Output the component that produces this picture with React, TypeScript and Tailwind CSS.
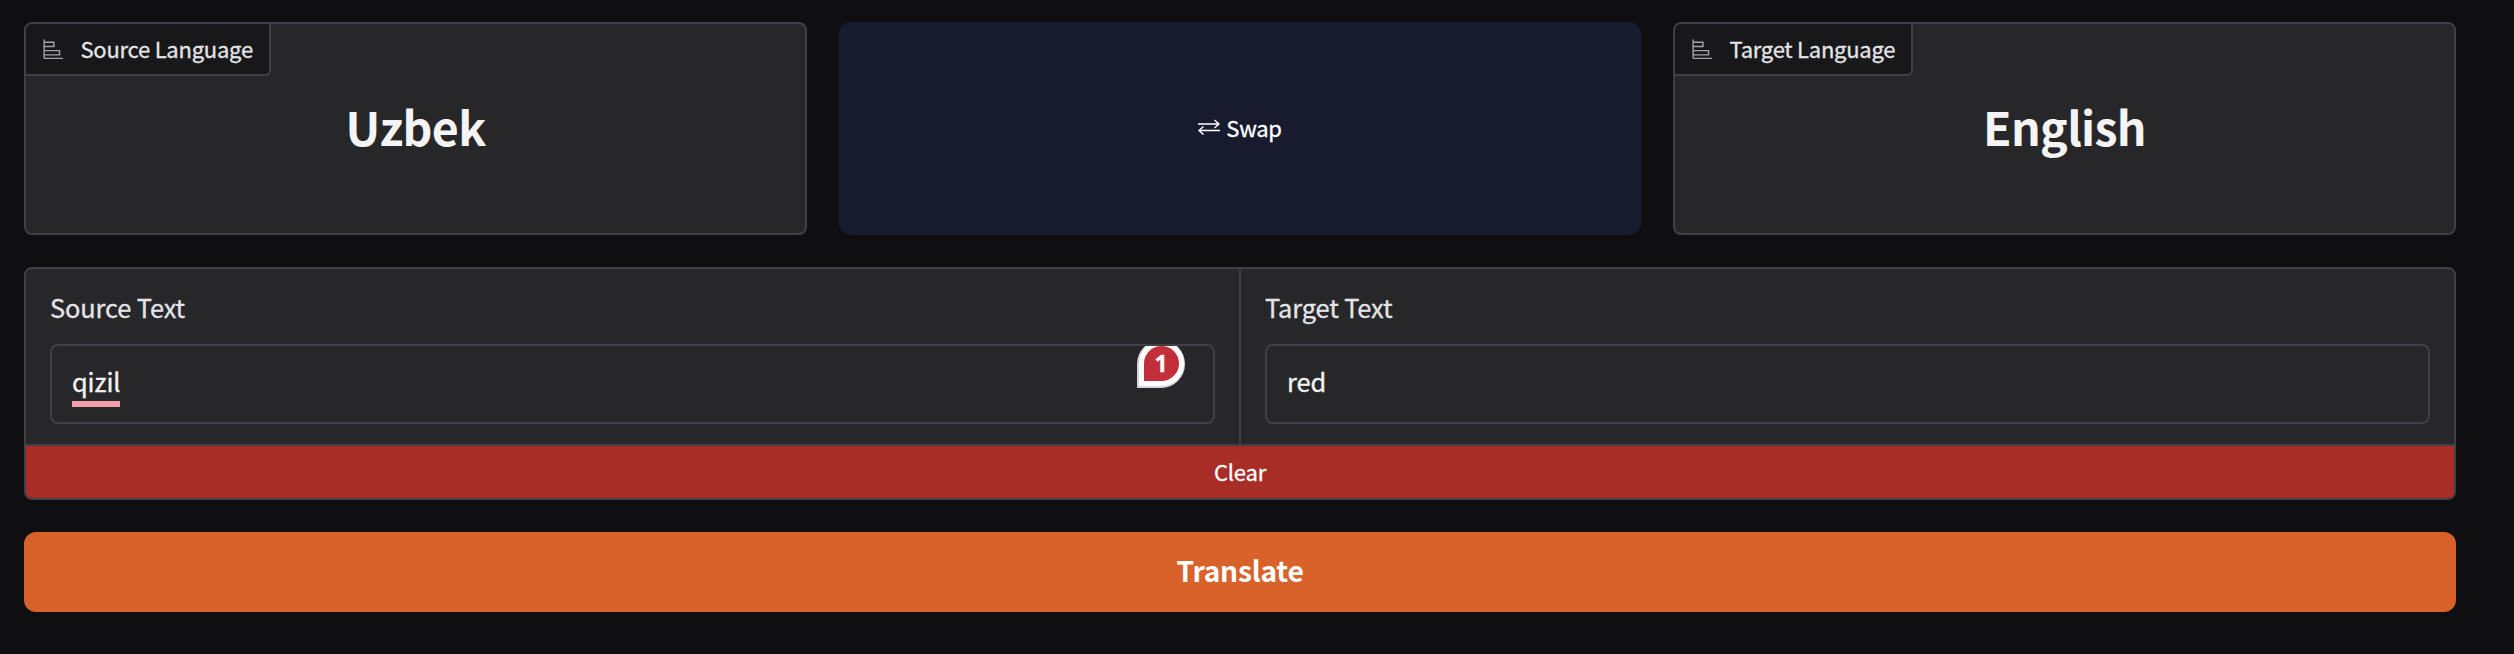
import React from "react";

function BarChartIcon() {
  return (
    <svg viewBox="0 0 32 32" className="h-[22.5px] w-[22.5px] text-[#a1a1aa]" aria-hidden="true">
      <path
        fill="currentColor"
        d="M4 2H2v26a2 2 0 0 0 2 2h26v-2H4v-3h22v-8H4v-4h14V5H4Zm20 17v4H4v-4ZM16 7v4H4V7Z"
      />
    </svg>
  );
}

function LanguageCard({ label, value }: { label: string; value: string }) {
  return (
    <section className="relative flex h-[213px] w-[783px] items-center justify-center overflow-hidden rounded-lg border-2 border-[#3f3f46] bg-[#27272a]">
      <div className="absolute left-0 top-0 flex h-[52px] items-center gap-4 rounded-br-md border-b-2 border-r-2 border-[#3f3f46] bg-[#18181b] pl-4 pr-4 text-[22px] leading-none tracking-[-0.25px] text-[#e4e4e7] [-webkit-text-stroke:0.3px_#e4e4e7]">
        <BarChartIcon />
        <span className="whitespace-nowrap pb-[2px]">{label}</span>
      </div>
      <h2 className="pb-[5px] text-[46.5px] font-bold leading-none tracking-[-0.7px] text-[#f4f4f5]">{value}</h2>
    </section>
  );
}

function TextField({ label, children }: { label: string; children: React.ReactNode }) {
  return (
    <div className="flex flex-1 flex-col bg-[#27272a] px-6 pt-5">
      <span className="h-[55px] text-[25.4px] leading-[36px] tracking-[-0.12px] text-[#e4e4e7] [-webkit-text-stroke:0.3px_#e4e4e7]">
        {label}
      </span>
      <div className="relative flex h-20 items-center overflow-hidden rounded-lg border-2 border-[#3f3f46] px-5 pb-[5px] text-[25.4px] leading-none tracking-[-0.12px] text-[#f4f4f5] [-webkit-text-stroke:0.3px_#f4f4f5]">
        {children}
      </div>
    </div>
  );
}

export default function App() {
  return (
    <main className="flex h-[654px] w-[2514px] flex-col gap-8 bg-[#0f0f11] pl-6 pt-[22px] font-['Noto_Sans_CJK_SC',sans-serif]">
      <div className="flex w-[2432px] gap-8">
        <LanguageCard label="Source Language" value="Uzbek" />
        <button className="flex h-[213px] flex-1 items-center justify-center gap-[6px] rounded-xl bg-[#171b2d] pb-[4px] text-[22px] leading-none tracking-[-0.3px] text-white [-webkit-text-stroke:0.3px_#ffffff]">
          <svg viewBox="0 0 22 16" className="h-4 w-[22px]" fill="none" stroke="currentColor" strokeWidth="1.5">
            <path d="M0 5H21M16.500 1L21 5L16.500 9M22 11.500H1M5.500 7.500L1 11.500L5.500 15.500" />
          </svg>
          Swap
        </button>
        <LanguageCard label="Target Language" value="English" />
      </div>

      <section className="flex h-[233px] w-[2432px] flex-col gap-[2px] overflow-hidden rounded-lg border-2 border-[#3f3f46] bg-[#3f3f46]">
        <div className="flex h-[175px] gap-[2px]">
          <TextField label="Source Text">
            <span className="relative">
              qizil
              <span className="absolute -bottom-[13px] left-0 h-[6px] w-12 bg-[#f29dab]" />
            </span>
            <span className="absolute -top-[6px] right-[28px] flex h-12 w-12 items-center justify-center rounded-full rounded-bl-none bg-[#d5d5e0] pb-[1px]">
              <span className="flex h-[45px] w-[45px] items-center justify-center rounded-full rounded-bl-none bg-white">
                <span className="flex h-[35px] w-[35px] items-center justify-center rounded-full rounded-bl-none bg-[#c22e3a] font-['Open_Sans',sans-serif] text-[23px] font-bold text-white">
                  1
                </span>
              </span>
            </span>
          </TextField>
          <TextField label="Target Text">red</TextField>
        </div>
        <button className="h-[52px] bg-[#a82d27] pb-[3px] text-[22px] leading-none tracking-[-0.2px] text-white [-webkit-text-stroke:0.3px_#ffffff]">
          Clear
        </button>
      </section>

      <button className="h-20 w-[2432px] rounded-xl bg-[#d9622b] pb-[3px] text-[28.2px] font-bold leading-none tracking-[-0.2px] text-white">
        Translate
      </button>
    </main>
  );
}
